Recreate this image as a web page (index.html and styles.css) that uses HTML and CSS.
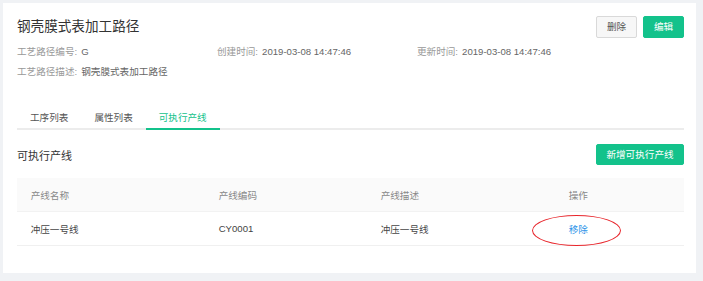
FILE: index.html
```html
<!DOCTYPE html>
<html lang="zh">
<head>
<meta charset="utf-8">
<link rel="stylesheet" href="styles.css">
</head>
<body>
<div class="card">
  <div class="header">
    <h1 class="title">钢壳膜式表加工路径</h1>
    <div class="actions">
      <button class="btn btn-default">删除</button>
      <button class="btn btn-primary">编辑</button>
    </div>
  </div>
  <div class="meta">
    <div class="meta-item"><span class="label">工艺路径编号:</span><span class="value">G</span></div>
    <div class="meta-item"><span class="label">创建时间:</span><span class="value">2019-03-08 14:47:46</span></div>
    <div class="meta-item"><span class="label">更新时间:</span><span class="value">2019-03-08 14:47:46</span></div>
    <div class="meta-item wide"><span class="label">工艺路径描述:</span><span class="value">钢壳膜式表加工路径</span></div>
  </div>
  <div class="tabs">
    <div class="tab">工序列表</div>
    <div class="tab">属性列表</div>
    <div class="tab active">可执行产线</div>
  </div>
  <div class="section-head">
    <h2 class="section-title">可执行产线</h2>
    <button class="btn btn-primary btn-add">新增可执行产线</button>
  </div>
  <div class="table">
    <div class="row thead">
      <div class="cell">产线名称</div>
      <div class="cell">产线编码</div>
      <div class="cell">产线描述</div>
      <div class="cell">操作</div>
    </div>
    <div class="row tbody">
      <div class="cell">冲压一号线</div>
      <div class="cell">CY0001</div>
      <div class="cell">冲压一号线</div>
      <div class="cell"><span class="link">移除<span class="mark"></span></span></div>
    </div>
  </div>
</div>
</body>
</html>
```
FILE: styles.css
```css
* { box-sizing: border-box; }
html, body { margin: 0; padding: 0; }
body {
  background: #f0f2f5;
  font-family: "Liberation Sans", "Noto Sans CJK SC", sans-serif;
  font-size: 9.6px;
  color: #333;
  width: 703px;
  height: 281px;
  overflow: hidden;
  padding-top: 3px;
  padding-left: 3px;
}
.card {
  width: 693px;
  height: 270px;
  background: #fff;
  padding: 13px 12px 0 14px;
}
.header {
  display: flex;
  justify-content: space-between;
  align-items: center;
  height: 22px;
}
.title {
  margin: 0;
  font-size: 13.6px;
  font-weight: normal;
  color: #333;
  line-height: 22px;
}
.actions { display: flex; gap: 6px; }
.btn {
  font-family: inherit;
  font-size: 9.6px;
  height: 22px;
  padding: 0 11px;
  border-radius: 2px;
  border: 1px solid transparent;
  line-height: 20px;
  cursor: pointer;
}
.btn-default {
  width: 41px;
  padding: 0;
  background: #f7f7f7;
  border-color: #d9d9d9;
  color: #555;
}
.btn-primary {
  width: 41px;
  padding: 0;
  background: #13c28b;
  border-color: #13c28b;
  color: #fff;
}
.meta {
  margin-top: 4px;
  display: grid;
  grid-template-columns: 200px 200px 1fr;
  line-height: 19.5px;
}
.meta-item.wide { grid-column: 1 / -1; }
.label { color: #999; margin-right: 4px; }
.value { color: #666; }
.tabs {
  margin-top: 27px;
  display: flex;
  border-bottom: 2px solid #ececec;
  height: 22px;
}
.tab {
  padding: 0 13px;
  color: #555;
  line-height: 19px;
  margin-bottom: -2px;
  border-bottom: 2px solid transparent;
}
.tab.active {
  color: #13c28b;
  border-bottom-color: #13c28b;
}
.section-head {
  margin-top: 14px;
  display: flex;
  justify-content: space-between;
  align-items: center;
  height: 21px;
}
.section-title {
  margin: 0;
  font-size: 11px;
  font-weight: normal;
  color: #333;
}
.btn-add {
  width: 88px;
  height: 21px;
  line-height: 19px;
}
.table { margin-top: 13px; }
.row {
  display: grid;
  grid-template-columns: 188px 162px 188px 1fr;
  height: 34px;
  align-items: center;
}
.thead { background: #fafafa; color: #888; border-bottom: 1px solid #f2f2f2; }
.tbody { color: #444; border-bottom: 1px solid #f0f0f0; }
.cell { padding-left: 13.7px; }
.link {
  position: relative;
  color: #2f94e8;
}
.mark {
  position: absolute;
  left: -37px;
  top: -9px;
  width: 89px;
  height: 31px;
  border: 1.2px solid #e8262c;
  border-radius: 50%;
}
```
